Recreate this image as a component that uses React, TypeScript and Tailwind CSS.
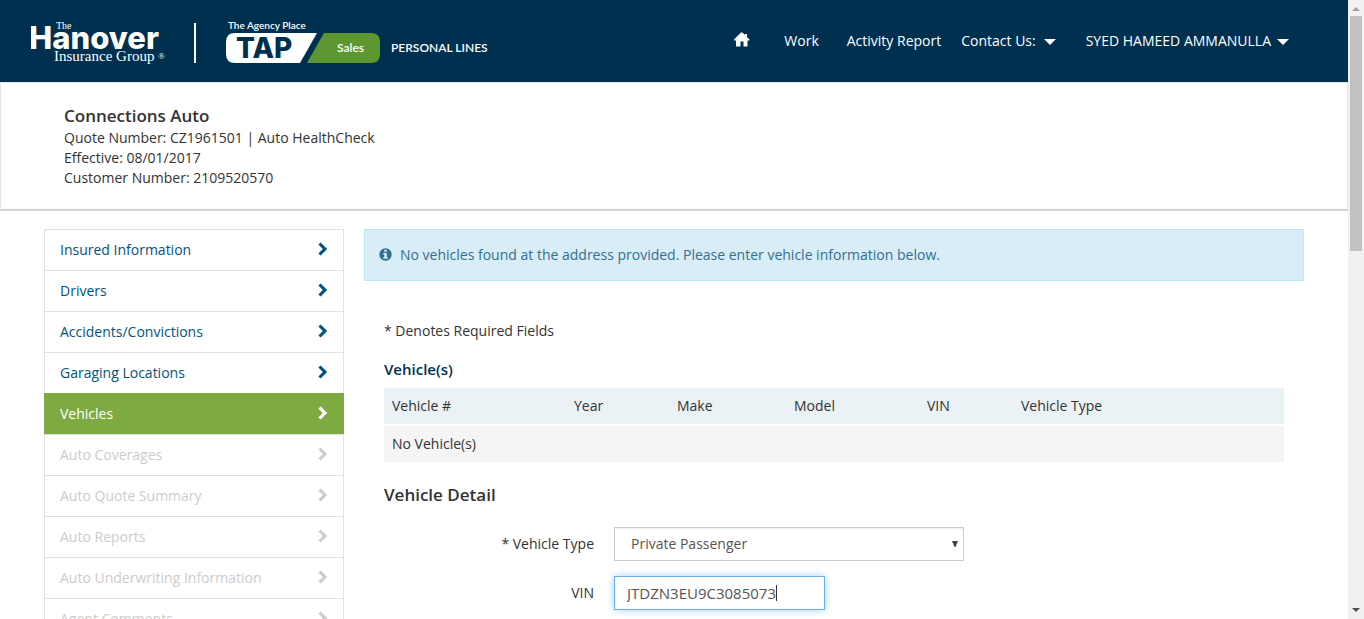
import { useState } from "react";
import { clsx } from "clsx";

type NavState = "open" | "active" | "disabled";

const sections: { label: string; state: NavState }[] = [
  { label: "Insured Information", state: "open" },
  { label: "Drivers", state: "open" },
  { label: "Accidents/Convictions", state: "open" },
  { label: "Garaging Locations", state: "open" },
  { label: "Vehicles", state: "active" },
  { label: "Auto Coverages", state: "disabled" },
  { label: "Auto Quote Summary", state: "disabled" },
  { label: "Auto Reports", state: "disabled" },
  { label: "Auto Underwriting Information", state: "disabled" },
  { label: "Agent Comments", state: "disabled" },
];

const columns = [
  { label: "Vehicle #", width: "w-[182px]" },
  { label: "Year", width: "w-[103px]" },
  { label: "Make", width: "w-[117px]" },
  { label: "Model", width: "w-[133px]" },
  { label: "VIN", width: "w-[94px]" },
  { label: "Vehicle Type", width: "" },
];

function HanoverLogo() {
  return (
    <svg width="136" height="46" viewBox="0 0 136 46" fill="#fff" role="img" aria-label="The Hanover Insurance Group">
      <text x="25" y="9" fontFamily="'Liberation Serif', serif" fontSize="10">The</text>
      <text x="-2" y="29" fontFamily="Inter, sans-serif" fontWeight="800" fontSize="31">Hanover</text>
      <text x="23" y="41" fontFamily="'Liberation Serif', serif" fontSize="15">Insurance Group</text>
      <text x="127" y="39" fontFamily="'Liberation Serif', serif" fontSize="9">®</text>
    </svg>
  );
}

function TapLogo() {
  return (
    <svg width="266" height="46" viewBox="0 0 266 46" fill="#fff" fontFamily="Lato, sans-serif" role="img" aria-label="TAP Sales, Personal Lines">
      <text x="2" y="9" fontSize="10" fontWeight="600">The Agency Place</text>
      <path d="M9 13H91L74 43H9Q0 43 0 34V22Q0 13 9 13Z" />
      <path d="M98 13H145Q154 13 154 22V34Q154 43 145 43H81Z" fill="#5c9732" />
      <text x="10" y="38" fontFamily="Inter, sans-serif" fontSize="28" fontWeight="800" fill="#00304f">TAP</text>
      <text x="111" y="32" fontSize="12" fontWeight="600">Sales</text>
      <text x="165" y="32" fontSize="12" fontWeight="600">PERSONAL LINES</text>
    </svg>
  );
}

function Caret() {
  return (
    <svg className="mt-0.5" width="12" height="6" viewBox="0 0 12 6" fill="currentColor" aria-hidden="true">
      <path d="M0 0H12L6 6Z" />
    </svg>
  );
}

function Chevron() {
  return (
    <svg className="mb-0.5 shrink-0" width="10" height="14" viewBox="0 0 10 14" fill="currentColor" aria-hidden="true">
      <path d="M2.6 0.4L9.2 7L2.6 13.6L0.4 11.4L4.8 7L0.4 2.6Z" />
    </svg>
  );
}

function Scrollbar() {
  return (
    <div className="flex w-4 shrink-0 flex-col items-center bg-[#f1f1f1]" aria-hidden="true">
      <svg className="shrink-0" width="16" height="16" viewBox="0 0 16 16" fill="#a3a3a3">
        <path d="M4 11H12L8 7Z" />
      </svg>
      <div className="h-[38%] w-3 bg-[#c1c1c1]" />
      <svg className="mt-auto shrink-0" width="16" height="16" viewBox="0 0 16 16" fill="#505050">
        <path d="M4 5H12L8 9Z" />
      </svg>
    </div>
  );
}

export default function App() {
  const [type, setType] = useState("Private Passenger");
  const [vin, setVin] = useState("JTDZN3EU9C3085073");

  return (
    <div className="flex h-screen overflow-hidden bg-white font-['Open_Sans',sans-serif] text-sm leading-5 text-[#333]">
      <div className="min-w-0 flex-1 overflow-hidden">
        <header className="flex h-[82px] items-center bg-[#00304f] pl-[31px] pr-[59px] text-white">
          <div className="mt-1 flex items-center">
            <HanoverLogo />
            <div className="ml-[27px] mr-[30px] h-10 w-0.5 bg-white" />
            <TapLogo />
          </div>
          <nav className="ml-auto flex items-center">
            <a href="#home" aria-label="Home" className="mb-1 mr-[34px]">
              <svg width="16" height="15" viewBox="0 0 16 15" fill="currentColor" aria-hidden="true">
                <path d="M7 0.5H8.5L11 3V2H13V5L15.5 7.5V8.5H13.5V14.5H9.5V9.5H6.5V14.5H2V8.5H0V7.5Z" />
              </svg>
            </a>
            <a href="#work" className="mr-7">Work</a>
            <a href="#activity" className="mr-5">Activity Report</a>
            <button type="button" className="mr-[30px] flex items-center gap-2">
              Contact Us: <Caret />
            </button>
            <button type="button" className="flex items-center gap-1.5">
              SYED HAMEED AMMANULLA <Caret />
            </button>
          </nav>
        </header>

        <section className="border border-[#e5e5e5] border-b-[#ccc] px-[63px] pb-[21px] pt-[21px] shadow-[0_1px_1px_#ddd]">
          <h1 className="text-[17px] font-semibold leading-6">Connections Auto</h1>
          <p>Quote Number: CZ1961501 | Auto HealthCheck</p>
          <p>Effective: 08/01/2017</p>
          <p>Customer Number: 2109520570</p>
        </section>

        <div className="flex items-start gap-5 px-11 pt-[19px]">
          <nav className="w-[300px] shrink-0" aria-label="Quote sections">
            <ul>
              {sections.map(({ label, state }) => (
                <li key={label}>
                  <a
                    href={"#" + label}
                    aria-disabled={state === "disabled"}
                    className={clsx(
                      "flex h-[41px] items-center justify-between border border-b-0 px-[15px]",
                      state === "open" && "border-[#e2e2e2] text-[#005480]",
                      state === "active" && "border-[#7dab41] bg-[#7dab41] text-white",
                      state === "disabled" && "border-[#e2e2e2] text-[#ccc]",
                    )}
                  >
                    {label}
                    <Chevron />
                  </a>
                </li>
              ))}
            </ul>
          </nav>

          <main className="min-w-0 flex-1">
            <div role="status" className="flex h-[52px] items-center gap-2 border border-[#bce8f1] bg-[#d9edf7] px-3.5 text-[#31708f]">
              <svg className="mb-0.5" width="13" height="13" viewBox="0 0 13 13" aria-hidden="true">
                <circle cx="6.5" cy="6.5" r="6.2" fill="currentColor" />
                <path d="M5.2 1.8H7.8V3.8H5.2ZM4.3 5H7.8V9.3H8.8V10.8H4.3V9.3H5.3V6.4H4.3Z" fill="#d9edf7" />
              </svg>
              No vehicles found at the address provided. Please enter vehicle information below.
            </div>

            <div className="px-5 pt-10">
              <p>* Denotes Required Fields</p>
              <h2 className="mt-4 text-[15px] font-semibold leading-6 text-[#00304f]">Vehicle(s)</h2>
              <table className="mt-[7px] w-full table-fixed border-collapse text-left">
                <thead>
                  <tr className="bg-[#eaf2f6]">
                    {columns.map((c) => (
                      <th key={c.label} scope="col" className={clsx("h-[37px] px-2 font-normal", c.width)}>
                        {c.label}
                      </th>
                    ))}
                  </tr>
                </thead>
                <tbody>
                  <tr className="border-t-2 border-white bg-[#f5f5f5]">
                    <td colSpan={6} className="h-[37px] px-2">No Vehicle(s)</td>
                  </tr>
                </tbody>
              </table>

              <h2 className="mt-[21px] text-[17px] font-semibold leading-6">Vehicle Detail</h2>
              <form className="mt-5 grid grid-cols-[210px_1fr] items-center gap-x-5 gap-y-[15px]">
                <label htmlFor="vehicle-type" className="text-right">* Vehicle Type</label>
                <div className="relative w-[350px]">
                  <select
                    id="vehicle-type"
                    value={type}
                    onChange={(e) => setType(e.target.value)}
                    className="block h-[34px] w-full appearance-none border border-[#ccc] bg-white px-4 text-[#555] shadow-[inset_0_1px_1px_#eee] outline-none"
                  >
                    <option>Private Passenger</option>
                    <option>Motor Home</option>
                  </select>
                  <svg className="pointer-events-none absolute right-1.5 top-3.5" width="6" height="6" viewBox="0 0 6 6" fill="#444" aria-hidden="true">
                    <path d="M0 0H6L3.5 6H2.5Z" />
                  </svg>
                </div>
                <label htmlFor="vin" className="text-right">VIN</label>
                <div className="relative w-[211px]">
                  <input
                    id="vin"
                    value={vin}
                    onChange={(e) => setVin(e.target.value)}
                    className="block h-[34px] w-full border border-[#66afe9] px-3 text-[15px] text-[#555] caret-transparent shadow-[0_0_8px_#a6d3f5] outline-none"
                  />
                  <span className="pointer-events-none absolute left-[162px] top-[9px] h-4 w-px bg-[#333]" aria-hidden="true" />
                </div>
              </form>
            </div>
          </main>
        </div>
      </div>
      <Scrollbar />
    </div>
  );
}
